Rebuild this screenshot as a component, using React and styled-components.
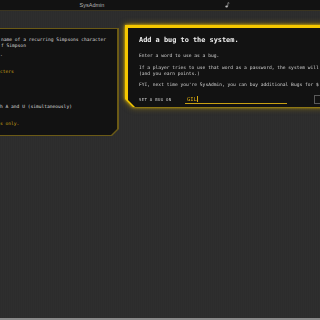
import React from "react"
import styled, { createGlobalStyle } from "styled-components"

const Global = createGlobalStyle`
    html, body {
        margin: 0;
        padding: 0;
        background: #2d2d2d;
    }
`;

const Page = styled.div`
    position: relative;
    width: 320px;
    height: 320px;
    overflow: hidden;
    background-color: #2e2e2e;
    background-image: repeating-linear-gradient(90deg, rgba(0,0,0,0.05) 0 1px, transparent 1px 2px);
    font-family: "DejaVu Sans Mono", "Liberation Mono", monospace;
`;

const TopBar = styled.div`
    height: 10px;
    background: #121212;
    border-bottom: 1px solid #3b3520;
    display: flex;
    align-items: center;
    font-family: "Liberation Sans", Arial, sans-serif;
    font-size: 5.5px;
    color: #b5b5b5;
`;

const BarItem = styled.div`
    width: ${({ $w }) => $w}px;
    text-align: center;
`;

const Stage = styled.div`
    padding-top: 17px;
`;

const Frame = styled.div`
    background: ${({ $edge }) => $edge};
    clip-path: ${({ $clip }) => $clip};
    padding: ${({ $pad }) => $pad};
`;

const LeftPanel = styled.div`
    width: 117px;
    height: 106px;
    background: #121212;
    clip-path: polygon(0 0, 100% 0, 100% calc(100% - 6px), calc(100% - 6px) 100%, 0 100%);
    padding-top: 8px;
    box-sizing: border-box;
    font-size: 4.6px;
    line-height: 6px;
    color: #dcdcdc;
    white-space: pre;
`;

const Line = styled.div`
    padding-left: ${({ $indent }) => $indent || 0}px;
    margin-top: ${({ $gap }) => $gap || 0}px;
    color: ${({ $gold }) => ($gold ? "#c9a012" : "inherit")};
`;

const ModalGlow = styled.div`
    position: absolute;
    left: 125px;
    top: 25px;
    filter: drop-shadow(0 0 1.5px rgba(245, 200, 0, 0.9)) drop-shadow(0 0 3px rgba(200, 160, 0, 0.6));
`;

const Modal = styled.div`
    width: 210px;
    height: 79px;
    background: #121212;
    box-sizing: border-box;
    padding: 8px 0 0 11px;
    color: #d4d4d4;
    font-size: 4.6px;
    line-height: 6px;
    white-space: nowrap;
    clip-path: polygon(0 0, 100% 0, 100% 100%, 7px 100%, 0 calc(100% - 7px));
`;

const Title = styled.h1`
    margin: 0 0 8px 0;
    font-size: 6.9px;
    line-height: 9px;
    font-weight: bold;
    color: #f2f2f2;
`;

const Para = styled.p`
    margin: 0 0 ${({ $after }) => $after}px 0;
`;

const FormRow = styled.div`
    display: flex;
    align-items: center;
    margin-top: 7px;
`;

const Label = styled.span`
    width: 46px;
    font-size: 4px;
    color: #cfcfcf;
    letter-spacing: 0.3px;
`;

const Field = styled.div`
    width: 102px;
    height: 8px;
    border-bottom: 1.5px solid #c9a012;
    display: flex;
    align-items: center;
    padding-left: 2px;
    box-sizing: border-box;
    font-size: 5.5px;
    color: #d9aa10;
`;

const Caret = styled.span`
    display: inline-block;
    width: 0.6px;
    height: 6px;
    background: #d9aa10;
    margin-left: 0.5px;
`;

const SubmitBox = styled.div`
    margin-left: 27px;
    width: 12px;
    height: 9px;
    border: 1px solid #5a5a5a;
    box-sizing: border-box;
`;

const BottomStrip = styled.div`
    position: absolute;
    left: 0;
    right: 0;
    bottom: 0;
    height: 2px;
    background: #8a8a8a;
`;

const NoteIcon = () => (
    <svg width="5" height="6" viewBox="0 0 5 6">
        <ellipse cx="1.6" cy="4.4" rx="1.3" ry="1" fill="#bdbdbd" />
        <path d="M2.7 4.3 L3 0.6 L4.4 1.2" stroke="#bdbdbd" strokeWidth="0.6" fill="none" />
    </svg>
);

const App = () => {
    return (
        <Page>
            <Global />
            <TopBar>
                <BarItem $w={184}>SysAdmin</BarItem>
                <BarItem $w={86}><NoteIcon /></BarItem>
            </TopBar>
            <Stage>
                <Frame
                    $edge="#6b5a16"
                    $pad="1px 1px 1px 0"
                    $clip="polygon(0 0, 100% 0, 100% calc(100% - 7px), calc(100% - 7px) 100%, 0 100%)"
                    style={{ width: 118 }}
                >
                    <LeftPanel>
                        <Line $indent={1}>name of a recurring Simpsons character</Line>
                        <Line $indent={1}>f Simpson</Line>
                        <Line $gap={3}>.</Line>
                        <Line $gap={11} $gold>cters</Line>
                        <Line $gap={29}>h A and U (simultaneously)</Line>
                        <Line $gap={11} $gold>s only.</Line>
                    </LeftPanel>
                </Frame>
            </Stage>
            <ModalGlow>
                <Frame
                    $edge="#f5c800"
                    $pad="3px 0 0 3px"
                    $clip="polygon(0 0, 100% 0, 100% 100%, 8px 100%, 0 calc(100% - 8px))"
                >
                    <Modal>
                        <Title>Add a bug to the system.</Title>
                        <Para $after={6}>Enter a word to use as a bug.</Para>
                        <Para $after={0}>If a player tries to use that word as a password, the system will</Para>
                        <Para $after={5}>(and you earn points.)</Para>
                        <Para $after={0}>FYI, next time you're SysAdmin, you can buy additional Bugs for $</Para>
                        <FormRow>
                            <Label>SET A BUG ON</Label>
                            <Field>GIL<Caret /></Field>
                            <SubmitBox />
                        </FormRow>
                    </Modal>
                </Frame>
            </ModalGlow>
            <BottomStrip />
        </Page>
    );
};

export default App
